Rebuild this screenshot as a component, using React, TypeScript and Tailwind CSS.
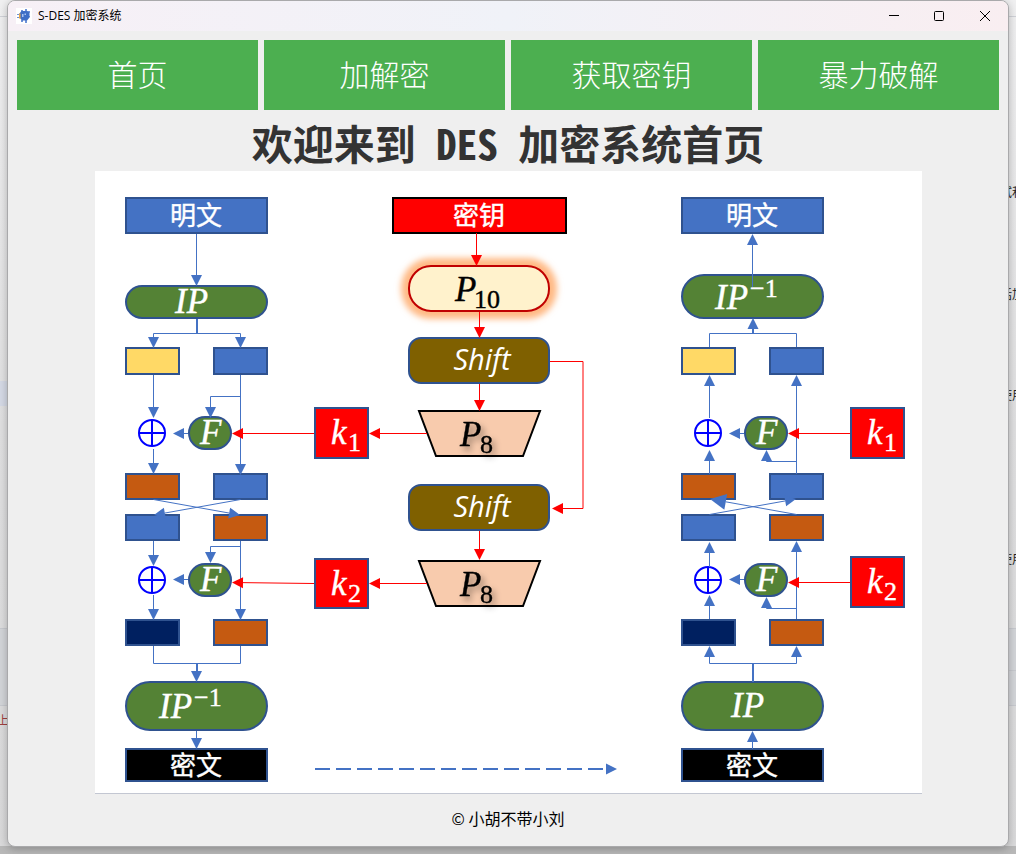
import React from "react";

const BLUE = "#4472c4";
const NAVY = "#2f528f";
const RED = "#ff0000";
const GREEN = "#548235";
const BROWN = "#c55a11";
const GOLD = "#ffd966";
const DEEP = "#002060";

const navItems = ["首页", "加解密", "获取密钥", "暴力破解"];

type Point = [number, number];

function Arrow({ points, color = BLUE, size = 11 }: { points: Point[]; color?: string; size?: number }) {
  const [ax, ay] = points[points.length - 2];
  const [bx, by] = points[points.length - 1];
  const length = Math.hypot(bx - ax, by - ay);
  const ux = (bx - ax) / length;
  const uy = (by - ay) / length;
  const cx = bx - ux * size;
  const cy = by - uy * size;
  const half = size / 2;
  const shaft = [...points.slice(0, -1), [cx, cy]];
  return (
    <g>
      <polyline points={shaft.map((p) => p.join(",")).join(" ")} fill="none" stroke={color} strokeWidth="1" />
      <polygon
        points={`${bx},${by} ${cx - uy * half},${cy + ux * half} ${cx + uy * half},${cy - ux * half}`}
        fill={color}
      />
    </g>
  );
}

function Line({ points, color = BLUE, width = 1 }: { points: Point[]; color?: string; width?: number }) {
  return <polyline points={points.map((p) => p.join(",")).join(" ")} fill="none" stroke={color} strokeWidth={width} />;
}

interface BoxProps {
  x: number;
  y: number;
  w: number;
  h: number;
  fill: string;
  stroke?: string;
  r?: number;
}

function Box({ x, y, w, h, fill, stroke = NAVY, r = 0 }: BoxProps) {
  return <rect x={x + 1} y={y + 1} width={w - 2} height={h - 2} rx={r} fill={fill} stroke={stroke} strokeWidth="2" />;
}

function Cjk({ x, y, children }: { x: number; y: number; children: string }) {
  return (
    <text x={x} y={y} fill="#fff" stroke="#fff" strokeWidth="0.4" textAnchor="middle" className="font-['Noto_Sans_CJK_SC',sans-serif] text-[26px]">
      {children}
    </text>
  );
}

interface FormulaProps {
  x: number;
  y: number;
  base: string;
  script?: string;
  sx?: number;
  sy?: number;
  fill?: string;
  shadow?: boolean;
}

function Formula({ x, y, base, script, sx = 0, sy = 0, fill = "#fff", shadow }: FormulaProps) {
  return (
    <g
      fill={fill}
      stroke={fill}
      strokeWidth="0.4"
      filter={shadow ? "url(#letter-shadow)" : undefined}
      className="font-['Liberation_Serif',serif]"
    >
      <text x={x} y={y} className="text-[35px] italic">
        {base}
      </text>
      {script && (
        <text x={x + sx} y={y + sy} className="text-[26px]">
          {script}
        </text>
      )}
    </g>
  );
}

function Xor({ x, y }: { x: number; y: number }) {
  return (
    <g fill="none" stroke="#0000ff" strokeWidth="2">
      <circle cx={x} cy={y} r="13" />
      <path d={`M${x - 13} ${y}H${x + 13}M${x} ${y - 13}V${y + 13}`} />
    </g>
  );
}

function RoundFunction({ x, y }: { x: number; y: number }) {
  return (
    <g>
      <Box x={x} y={y} w={44} h={34} r={16} fill={GREEN} />
      <Formula x={x + 12} y={y + 28} base="F" />
    </g>
  );
}

function Subkey({ x, y, h, index }: { x: number; y: number; h: number; index: string }) {
  return (
    <g>
      <Box x={x} y={y} w={55} h={h} fill={RED} />
      <Formula x={x + 17} y={y + 37} base="k" script={index} sx={17} sy={7} />
    </g>
  );
}

function Permutation({ y }: { y: number }) {
  return (
    <g>
      <polygon
        points={`419,${y} 540,${y} 523,${y + 45} 436,${y + 45}`}
        fill="#f8cbad"
        stroke="#000"
        strokeWidth="2"
      />
      <Formula x={460} y={y + 35} base="P" script="8" sx={20} sy={7} fill="#000" shadow />
    </g>
  );
}

function Shift({ y }: { y: number }) {
  return (
    <g>
      <Box x={408} y={y} w={142} h={47} r={12} fill="#7f6000" />
      <text
        x="482"
        y={y + 33}
        fill="#fff"
        textAnchor="middle"
        className="font-['Open_Sans',sans-serif] text-[29px] font-medium italic"
      >
        Shift
      </text>
    </g>
  );
}

/** The eight half-block registers shared by both directions. */
function Registers({ x }: { x: number }) {
  const rows = [
    { y: 347, h: 28, left: GOLD, right: BLUE },
    { y: 473, h: 27, left: BROWN, right: BLUE },
    { y: 514, h: 27, left: BLUE, right: BROWN },
    { y: 619, h: 27, left: DEEP, right: BROWN },
  ];
  return (
    <g>
      {rows.map((row) => (
        <g key={row.y}>
          <Box x={x} y={row.y} w={55} h={row.h} fill={row.left} />
          <Box x={x + 88} y={row.y} w={55} h={row.h} fill={row.right} />
        </g>
      ))}
    </g>
  );
}

function Encryption() {
  return (
    <g>
      <Box x={125} y={197} w={143} h={37} fill={BLUE} />
      <Cjk x={196} y={225}>明文</Cjk>
      <Box x={125} y={285} w={143} h={34} r={16} fill={GREEN} />
      <Formula x={175} y={313} base="IP" />
      <Registers x={125} />
      <RoundFunction x={188} y={416} />
      <RoundFunction x={188} y={563} />
      <Xor x={152} y={433} />
      <Xor x={152} y={580} />
      <Box x={125} y={681} w={143} h={50} r={24} fill={GREEN} />
      <Formula x={159} y={718} base="IP" script="−1" sx={35} sy={-12} />
      <Box x={125} y={748} w={143} h={34} fill="#000" />
      <Cjk x={196} y={775}>密文</Cjk>

      <Arrow points={[[196.5, 234], [196.5, 286]]} />
      <Line points={[[197, 319], [197, 334]]} width={2} />
      <Arrow points={[[196.5, 333.5], [153.5, 333.5], [153.5, 348]]} />
      <Arrow points={[[196.5, 333.5], [240.5, 333.5], [240.5, 348]]} />
      <Arrow points={[[153.5, 375], [153.5, 418]]} />
      <Arrow points={[[240.5, 375], [240.5, 475]]} />
      <Arrow points={[[240.5, 396.5], [210.5, 396.5], [210.5, 418]]} />
      <Arrow points={[[188, 433.5], [173, 433.5]]} />
      <Arrow points={[[153.5, 449], [153.5, 474]]} />
      <Arrow points={[[153.5, 499.5], [240, 515]]} />
      <Arrow points={[[240.5, 499.5], [154, 515]]} />
      <Arrow points={[[153.5, 541], [153.5, 566]]} />
      <Arrow points={[[240.5, 541], [240.5, 620]]} />
      <Arrow points={[[240.5, 546.5], [210.5, 546.5], [210.5, 563]]} />
      <Arrow points={[[188, 579.5], [173, 579.5]]} />
      <Arrow points={[[153.5, 595], [153.5, 620]]} />
      <Line points={[[153.5, 646], [153.5, 663.5], [240.5, 663.5], [240.5, 646]]} />
      <Arrow points={[[196.5, 663.5], [196.5, 682]]} />
      <Line points={[[197, 663], [197, 672]]} width={2} />
      <Arrow points={[[196.5, 731], [196.5, 749]]} />
    </g>
  );
}

function KeySchedule() {
  return (
    <g>
      <Box x={392} y={197} w={175} h={37} fill={RED} stroke="#000" />
      <Cjk x={479} y={225}>密钥</Cjk>
      <rect x="401" y="258" width="156" height="61" rx="30" fill="#ffb984" filter="url(#glow)" />
      <Box x={408} y={265} w={142} h={47} r={22} fill="#fff2cc" stroke="#c00000" />
      <Formula x={455} y={301} base="P" script="10" sx={19} sy={7} fill="#000" />
      <Shift y={337} />
      <Permutation y={411} />
      <Shift y={484} />
      <Permutation y={561} />
      <Subkey x={314} y={407} h={52} index="1" />
      <Subkey x={314} y={558} h={51} index="2" />

      <Arrow color={RED} points={[[476.5, 233], [476.5, 266]]} />
      <Arrow color={RED} points={[[479.5, 312], [479.5, 338]]} />
      <Arrow color={RED} points={[[479.5, 384], [479.5, 411]]} />
      <Arrow color={RED} points={[[479.5, 531], [479.5, 560]]} />
      <Arrow color={RED} points={[[550, 361.5], [583, 361.5], [583, 508.5], [552, 508.5]]} />
      <Arrow color={RED} points={[[427, 433.5], [369, 433.5]]} />
      <Arrow color={RED} points={[[427, 583.5], [369, 583.5]]} />
      <Arrow color={RED} points={[[314, 433.5], [232, 433.5]]} />
      <Arrow color={RED} points={[[314, 583.5], [232, 582.5]]} />
    </g>
  );
}

function Decryption() {
  return (
    <g>
      <Box x={681} y={197} w={143} h={37} fill={BLUE} />
      <Cjk x={752} y={225}>明文</Cjk>
      <Box x={681} y={274} w={143} h={45} r={22} fill={GREEN} />
      <Formula x={715} y={309} base="IP" script="−1" sx={35} sy={-12} />
      <Registers x={681} />
      <RoundFunction x={744} y={416} />
      <RoundFunction x={744} y={563} />
      <Xor x={708} y={433} />
      <Xor x={708} y={580} />
      <Box x={681} y={681} w={143} h={50} r={24} fill={GREEN} />
      <Formula x={731} y={717} base="IP" />
      <Box x={681} y={748} w={143} h={34} fill="#000" />
      <Cjk x={752} y={775}>密文</Cjk>
      <Subkey x={850} y={407} h={52} index="1" />
      <Subkey x={850} y={556} h={52} index="2" />

      <Arrow points={[[752.5, 287], [752.5, 234]]} />
      <Line points={[[709.5, 347], [709.5, 333.5], [796.5, 333.5], [796.5, 347]]} />
      <Line points={[[753, 334], [753, 328]]} width={2} />
      <Arrow points={[[753, 333.5], [753, 318]]} />
      <Arrow points={[[709.5, 418], [709.5, 375]]} />
      <Arrow points={[[796.5, 474], [796.5, 375]]} />
      <Arrow points={[[796.5, 461.5], [766.5, 461.5], [766.5, 450]]} />
      <Arrow points={[[744, 433.5], [729, 433.5]]} />
      <Arrow points={[[709.5, 474], [709.5, 450]]} />
      <Arrow points={[[709.5, 514.5], [796, 499]]} />
      <Arrow points={[[796.5, 514.5], [710, 499]]} size={16} />
      <Arrow points={[[709.5, 567], [709.5, 542]]} />
      <Arrow points={[[796.5, 619], [796.5, 541]]} />
      <Arrow points={[[796.5, 608.5], [766.5, 608.5], [766.5, 597]]} />
      <Arrow points={[[744, 579.5], [729, 579.5]]} />
      <Arrow points={[[709.5, 619], [709.5, 595]]} />
      <Arrow points={[[753, 663.5], [709.5, 663.5], [709.5, 646]]} />
      <Arrow points={[[753, 663.5], [796.5, 663.5], [796.5, 646]]} />
      <Line points={[[753, 663], [753, 682]]} width={2} />
      <Arrow points={[[752.5, 749], [752.5, 731]]} />
      <Arrow color={RED} points={[[850, 433.5], [788, 433.5]]} />
      <Arrow color={RED} points={[[850, 582.5], [788, 582.5]]} />
    </g>
  );
}

function Diagram() {
  return (
    <svg viewBox="95 171 827 622" className="block w-full" role="img" aria-label="S-DES">
      <defs>
        <filter id="glow" x="-20%" y="-40%" width="140%" height="180%">
          <feGaussianBlur stdDeviation="3" />
        </filter>
        <filter id="letter-shadow" x="-30%" y="-30%" width="170%" height="170%">
          <feDropShadow dx="3" dy="4" stdDeviation="3" floodColor="#000" floodOpacity="0.4" />
        </filter>
      </defs>
      <Encryption />
      <KeySchedule />
      <Decryption />
      <path d="M315 769H608" stroke={BLUE} strokeWidth="2" strokeDasharray="15 6" />
      <polygon points="606,763.5 617,769 606,774.5" fill={BLUE} />
    </svg>
  );
}

function AppLogo() {
  return (
    <svg viewBox="0 0 16 16" className="size-4 shrink-0 bg-white" aria-hidden="true">
      <path d="M5 2h2v2H5zM9 1h2v3H9zM1 6h3v1H1zM1 9h3v1H1zM12 3h2v2h-2zM12 8h2v1h-2zM5 12h2v2H5zM9 12h2v3H9z" fill="#6f93d8" />
      <path d="M5.500 3h6l2 2v4.500l-2.500 3H6l-2.500-3V5.500z" fill="#3f6fc6" />
      <path d="M3 5.500h1.500v5H3z" fill="#e6a545" />
      <path d="M6 6h1.500v3H6zM8.500 5.500H10v1.500H8.500z" fill="#a9c4f2" />
    </svg>
  );
}

function TitleBar() {
  return (
    <header className="flex h-[30px] items-center bg-linear-to-r from-[#f7f0f6] via-[#f0f2f8] to-[#f9eef1] pl-2">
      <AppLogo />
      <span className="ml-[6px] flex-1 font-['Open_Sans','Noto_Sans_CJK_SC',sans-serif] text-[12px] leading-4 text-black">
        S-DES 加密系统
      </span>
      <div className="flex">
        <button type="button" aria-label="最小化" className="flex h-[30px] w-[45px] items-center justify-center">
          <svg viewBox="0 0 10 10" className="size-[10px]" stroke="#000" fill="none">
            <path d="M0 4.500H10" />
          </svg>
        </button>
        <button type="button" aria-label="最大化" className="flex h-[30px] w-[45px] items-center justify-center">
          <svg viewBox="0 0 10 10" className="size-[10px]" stroke="#000" fill="none">
            <rect x="0.500" y="0.500" width="9" height="9" rx="1" />
          </svg>
        </button>
        <button type="button" aria-label="关闭" className="flex h-[30px] w-[47px] items-center justify-center">
          <svg viewBox="0 0 10 10" className="size-[10px]" stroke="#000" fill="none">
            <path d="M0 0L10 10M10 0L0 10" />
          </svg>
        </button>
      </div>
    </header>
  );
}

function Backdrop() {
  return (
    <div
      aria-hidden="true"
      className="absolute inset-0 overflow-hidden bg-linear-to-b from-[#f0f0f1] via-[#e0e0e1] to-[#dadadb] font-['Noto_Sans_CJK_SC',sans-serif] text-[12px] leading-4 text-[#222]"
    >
      <div className="absolute inset-x-0 top-4 h-px bg-[#d0d2d8]" />
      <div className="absolute top-[381px] left-0 h-[25px] w-2 bg-[#d5dae6]" />
      <div className="absolute inset-x-0 top-[628px] h-[78px] border-y border-[#c8cacf] bg-[#d3d5d9]" />
      <div className="absolute top-[670px] right-0 h-px w-2 bg-[#c8cacf]" />
      <div className="absolute inset-x-0 bottom-0 h-2 bg-[#b8b8b8]" />
      <span className="absolute top-[184px] right-[-8px] whitespace-nowrap">试和</span>
      <span className="absolute top-[286px] right-[-8px] whitespace-nowrap">括加</span>
      <span className="absolute top-[387px] right-[-8px] whitespace-nowrap">使用</span>
      <span className="absolute top-[551px] right-[-8px] whitespace-nowrap">使用</span>
      <span className="absolute top-[712px] left-[-3px] text-[#a04040]">上</span>
    </div>
  );
}

export default function App() {
  return (
    <div className="relative min-h-screen px-[7px] pb-[7px]">
      <Backdrop />
      <div className="relative flex min-h-[847px] flex-col overflow-hidden rounded-lg border border-[#a9a9ab] bg-[#efefef] shadow-[0_2px_8px_rgba(0,0,0,0.25)]">
        <TitleBar />
        <nav className="grid grid-cols-4 gap-[6px] px-[9px] pt-[9px]">
          {navItems.map((item) => (
            <button
              key={item}
              type="button"
              className="h-[70px] bg-[#4caf50] pb-1 font-['Noto_Sans_CJK_SC',sans-serif] text-[30px] font-light text-white"
            >
              {item}
            </button>
          ))}
        </nav>
        <main className="flex flex-col items-center">
          <h1 className="h-[61px] font-['Noto_Sans_Mono_CJK_SC','Noto_Sans_CJK_SC',monospace] text-[41px] leading-[65px] font-bold whitespace-nowrap text-[#333]">
            欢迎来到 DES 加密系统首页
          </h1>
          <div className="w-full max-w-[827px] border-b border-[#c3c7d2] bg-white">
            <Diagram />
          </div>
        </main>
        <footer className="pt-3 pb-4 text-center font-['Noto_Sans_CJK_SC',sans-serif] text-[16px] leading-6 text-black">
          © 小胡不带小刘
        </footer>
      </div>
    </div>
  );
}
